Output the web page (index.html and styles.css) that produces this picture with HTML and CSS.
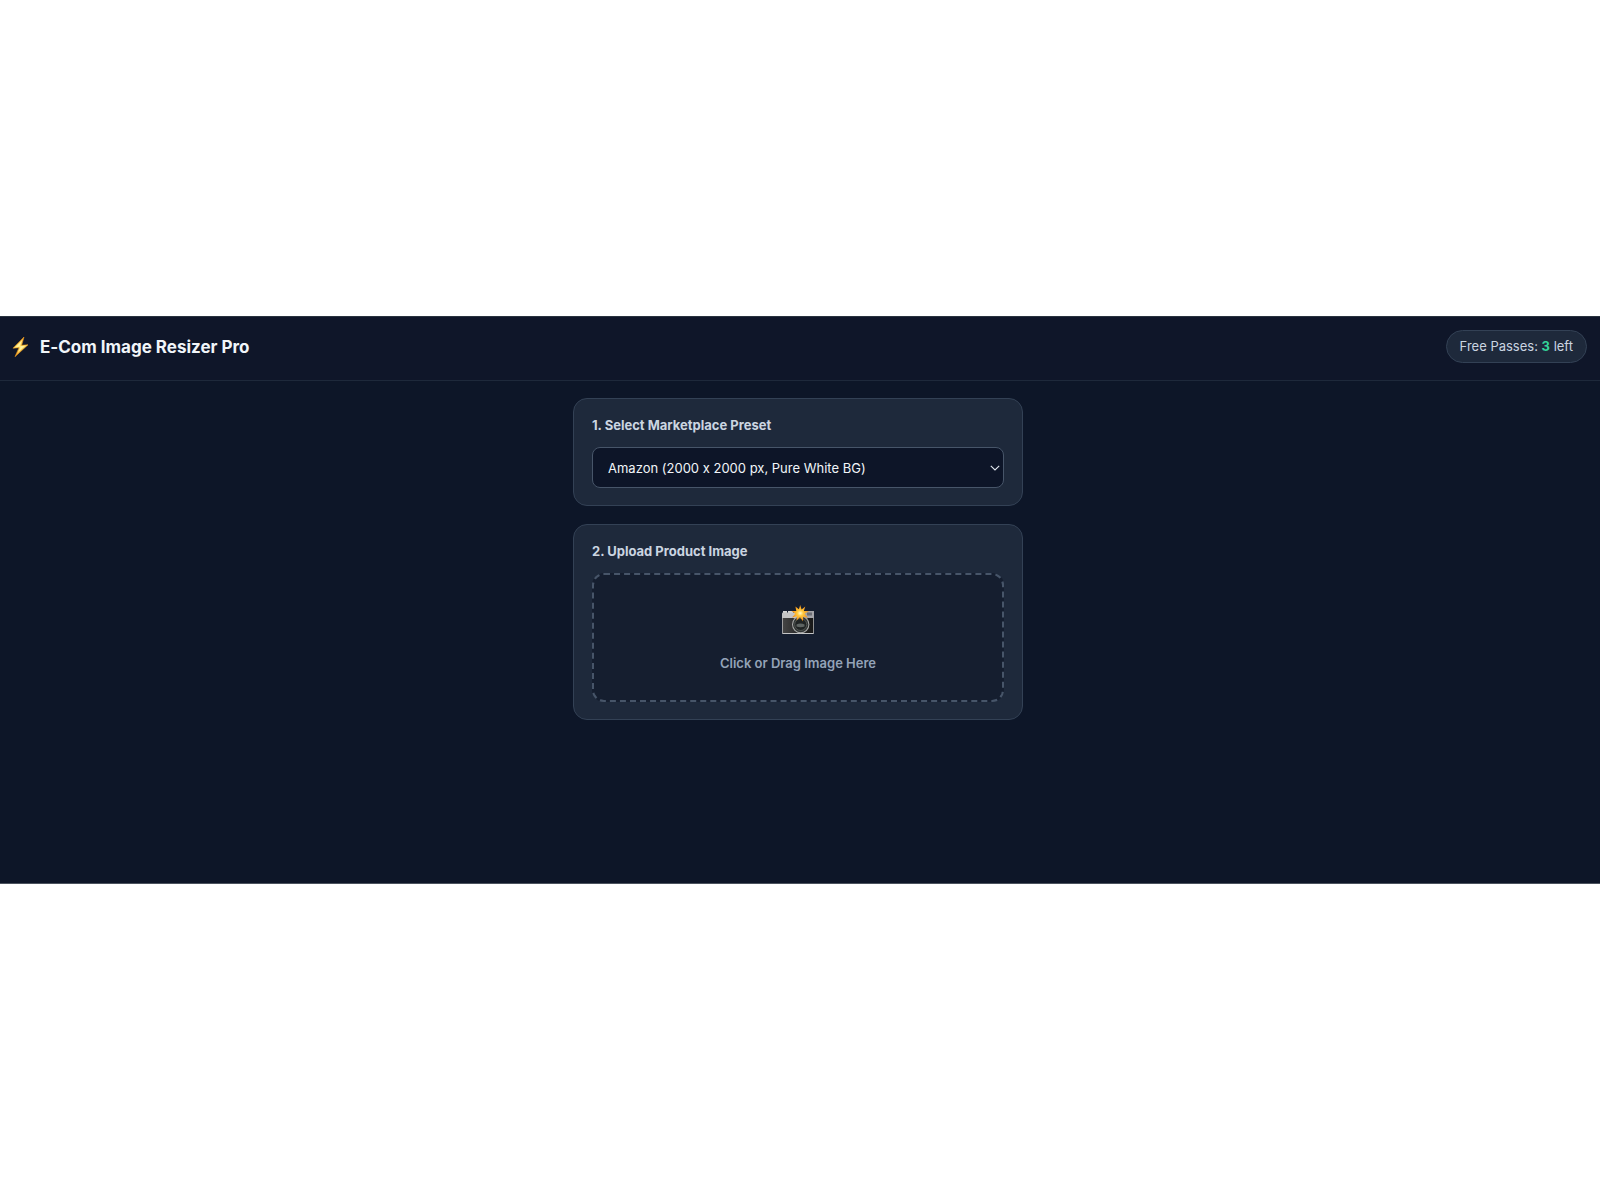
FILE: index.html
```html
<!DOCTYPE html>
<html lang="en">
<head>
    <meta charset="UTF-8">
    <meta name="viewport" content="width=device-width, initial-scale=1.0">
    <title>E-Com Image Resizer Pro</title>
    <link rel="stylesheet" href="styles.css">
</head>
<body>
    <div class="app">
        <!-- Header -->
        <header class="header">
            <div class="brand">
                <svg class="brand-icon" viewBox="0 0 18 22" aria-hidden="true">
                    <defs>
                        <linearGradient id="boltFill" x1="0" y1="0" x2="0" y2="1">
                            <stop offset="0" stop-color="#f9a72b"/>
                            <stop offset="0.5" stop-color="#ffe36a"/>
                            <stop offset="1" stop-color="#f59a1c"/>
                        </linearGradient>
                    </defs>
                    <path d="M13 1 2 12.2 8 11.7 4 20.7 17 8.8 10.6 9.3Z" fill="url(#boltFill)" stroke="#e8951d" stroke-width="0.6"/>
                    <path d="M11.3 4 4.8 11.1 9.8 10.6 7 16.2 14 9.8 8.6 10.3Z" fill="#fff3a0"/>
                </svg>
                <h1>E-Com Image Resizer Pro</h1>
            </div>
            <div class="passes">Free Passes: <strong id="passCount">3</strong> left</div>
        </header>

        <main class="main">
            <div class="container">
                <!-- Preset -->
                <section class="card">
                    <label class="card-label" for="preset">1. Select Marketplace Preset</label>
                    <div class="select-wrap">
                        <select id="preset">
                            <option value="amazon">Amazon (2000 x 2000 px, Pure White BG)</option>
                        </select>
                        <svg class="chevron" viewBox="0 0 10 6" aria-hidden="true">
                            <path d="M0.8 0.8 5 5 9.2 0.8" fill="none" stroke="currentColor" stroke-width="1.1"/>
                        </svg>
                    </div>
                </section>

                <!-- Upload -->
                <section class="card">
                    <h2 class="card-label">2. Upload Product Image</h2>
                    <label class="dropzone" for="fileInput">
                        <svg class="camera" viewBox="0 0 34 30" aria-hidden="true">
                            <defs>
                                <linearGradient id="bodyFill" x1="0" y1="0" x2="1" y2="0">
                                    <stop offset="0" stop-color="#454545"/>
                                    <stop offset="0.5" stop-color="#292929"/>
                                    <stop offset="1" stop-color="#181818"/>
                                </linearGradient>
                                <radialGradient id="flashFill">
                                    <stop offset="0" stop-color="#fffbd0"/>
                                    <stop offset="0.35" stop-color="#ffc83c"/>
                                    <stop offset="1" stop-color="#f28a12"/>
                                </radialGradient>
                            </defs>
                            <path d="M2 6h4v2h1V6h5v3H2Z" fill="#d5d6d7"/>
                            <rect x="1" y="7.5" width="32" height="21.5" rx="1" fill="#c4c5c6"/>
                            <rect x="1.7" y="13" width="30.6" height="15" fill="url(#bodyFill)"/>
                            <rect x="24" y="6" width="9" height="7" fill="#a3a4a8"/>
                            <rect x="26" y="7.5" width="5" height="3" fill="#6c6e75"/>
                            <circle cx="19.7" cy="19.5" r="8.7" fill="#a9aaa8"/>
                            <circle cx="19.7" cy="19.5" r="7.7" fill="#303434"/>
                            <circle cx="19.7" cy="19.5" r="6" fill="#202424" stroke="#5c5f5b" stroke-width="0.8"/>
                            <path d="M15.5 19.5q4-2 8 0v2q-4 1.5-8 0Z" fill="#5f6563"/>
                            <path d="M19.2 0 20.6 4.4 24.3 1.5 22.8 5.9 28 6.3 23.5 8.8 27 12.8 22.2 11.4 22 16.3 19 12.3 15.5 15.5 15.8 11.3 11 12.5 14.3 8.8 10.5 6 15.3 5.9 14.4 1.6 17.9 4.3Z" fill="url(#flashFill)"/>
                        </svg>
                        <span>Click or Drag Image Here</span>
                        <input type="file" id="fileInput" accept="image/*">
                    </label>
                </section>
            </div>
        </main>
    </div>
</body>
</html>
```
FILE: styles.css
```css
* {
    box-sizing: border-box;
    margin: 0;
    padding: 0;
}
body {
    font-family: Inter, 'Liberation Sans', sans-serif;
    font-variant-ligatures: no-contextual;
    background: #fff;
    color: #f1f5f9;
    min-height: 100vh;
    display: flex;
    align-items: center;
}
.app {
    width: 100%;
    min-height: 568px;
    background: #0d1628;
    border-top: 1px solid #29333f;
    border-bottom: 1px solid #4b535e;
}
.header {
    display: flex;
    justify-content: space-between;
    align-items: center;
    padding: 13px 13px 17px;
    border-bottom: 1px solid #1e293b;
    background: #0f1629;
}
.brand {
    display: flex;
    align-items: center;
    gap: 11px;
}
.brand-icon {
    width: 18px;
    height: 22px;
    margin-left: -2px;
}
.brand h1 {
    font-size: 17px;
    line-height: 24px;
    font-weight: 700;
}
.passes {
    background: #1e293b;
    border: 1px solid #334155;
    border-radius: 20px;
    padding: 6px 13px;
    font-size: 13px;
    line-height: 19px;
    color: #cbd5e1;
}
.passes strong {
    color: #34d399;
    font-weight: 700;
}
.main {
    padding: 17px 4px 17px 0;
}
.container {
    max-width: 450px;
    margin: 0 auto;
    display: flex;
    flex-direction: column;
    gap: 18px;
}
.card {
    background: #1e293b;
    border: 1px solid #334155;
    border-radius: 14px;
    padding: 18px 18px 17px;
}
.card-label {
    display: block;
    font-size: 13px;
    line-height: 16px;
    font-weight: 700;
    color: #cbd5e1;
    margin-bottom: 14px;
}
.select-wrap {
    position: relative;
}
.select-wrap select {
    appearance: none;
    width: 100%;
    height: 41px;
    padding: 0 15px;
    font-family: inherit;
    font-size: 13px;
    font-variant-ligatures: no-contextual;
    color: #f1f5f9;
    background: #0d1528;
    border: 1px solid #475569;
    border-radius: 8px;
}
.chevron {
    position: absolute;
    right: 4px;
    top: 18px;
    width: 10px;
    height: 6px;
    color: #e2e8f0;
    pointer-events: none;
}
.dropzone {
    display: flex;
    flex-direction: column;
    align-items: center;
    gap: 19px;
    padding: 30px 16px 28px;
    background: #151e2f;
    border: 2px dashed #475569;
    border-radius: 12px;
    font-size: 13px;
    line-height: 18px;
    font-weight: 600;
    color: #94a3b8;
    cursor: pointer;
}
.dropzone input {
    display: none;
}
.camera {
    width: 34px;
    height: 30px;
}
```
